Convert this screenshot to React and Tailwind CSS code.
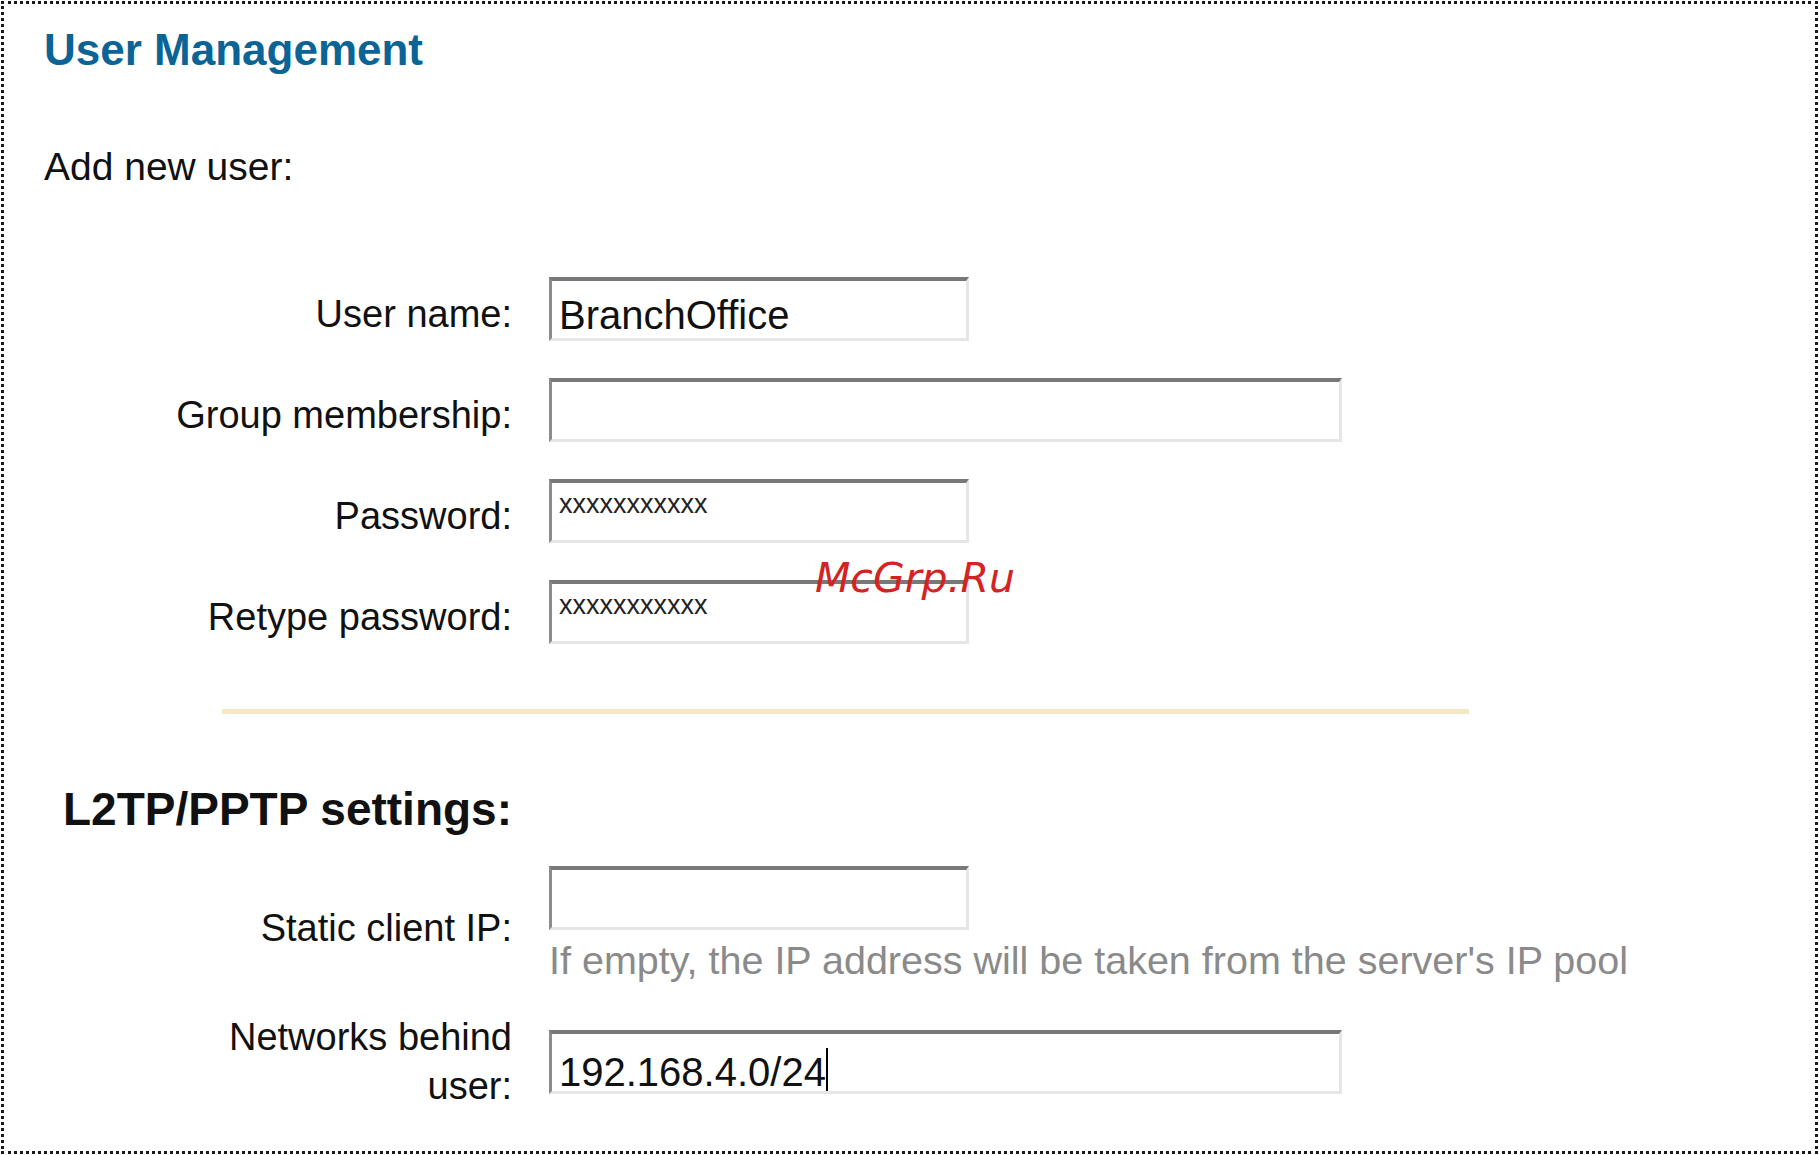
const sans = "font-['Liberation_Sans',Arial,sans-serif]";

function Field({ wide, children, className = '' }) {
    return (
        <div
            className={`h-[64px] ${wide ? 'w-[793px]' : 'w-[420px]'} bg-white border-t-[4px] border-l-[3px] border-r-[3px] border-b-[3px] border-t-[#787878] border-l-[#8c8c8c] border-r-[#e6e6e8] border-b-[#e6e6e8] pl-[7px] whitespace-nowrap ${className}`}
        >
            {children}
        </div>
    );
}

function Row({ label, children, labelClass = 'pt-[10px] leading-[40px]' }) {
    return (
        <div className="flex items-center">
            <div className={`w-[468px] shrink-0 text-right text-[38px] text-[#111] ${labelClass}`}>{label}</div>
            <div className="ml-[37px]">{children}</div>
        </div>
    );
}

export default function App() {
    return (
        <div className={`w-[1819px] h-[1155px] bg-white p-[1px] ${sans}`}>
            <div className="relative h-full border-[3px] border-dotted border-[#1a1a1a] pt-[24px] pl-[40px]">
                <h1 className="text-[44px] leading-[44px] font-bold text-[#0a6496]">User Management</h1>

                <p className="mt-[75px] text-[39px] leading-[40px] text-[#111]">Add new user:</p>

                <div className="mt-[90px] flex flex-col gap-[37px]">
                    <Row label="User name:">
                        <Field className="pt-[14px] text-[40px] leading-[40px] text-[#111]">BranchOffice</Field>
                    </Row>
                    <Row label="Group membership:">
                        <Field wide />
                    </Row>
                    <Row label="Password:">
                        <Field className="pt-[8px] text-[27px] leading-[27px] text-[#222]">xxxxxxxxxxx</Field>
                    </Row>
                    <Row label="Retype password:">
                        <Field className="pt-[8px] text-[27px] leading-[27px] text-[#222]">xxxxxxxxxxx</Field>
                    </Row>
                </div>

                {/* divider */}
                <div className="mt-[65px] ml-[178px] w-[1247px] h-[5px] bg-[#f5e6c4]"></div>

                <div className="mt-[72px] w-[468px] text-right text-[46px] leading-[46px] font-bold text-[#111] whitespace-nowrap">
                    L2TP/PPTP settings:
                </div>

                <div className="mt-[34px]">
                    <Row label="Static client IP:">
                        <div className="flex flex-col">
                            <Field />
                            <p className="mt-[10px] text-[39.5px] leading-[40px] text-[#8a8a8a] whitespace-nowrap">
                                If empty, the IP address will be taken from the server's IP pool
                            </p>
                        </div>
                    </Row>
                </div>

                <div className="mt-[33px]">
                    <Row label={<>Networks behind<br />user:</>} labelClass="leading-[49px]">
                        <Field wide className="pt-[14px] text-[40px] leading-[40px] text-[#111]">
                            192.168.4.0/24<span className="inline-block w-[2px] h-[43px] bg-black align-[-5px]"></span>
                        </Field>
                    </Row>
                </div>

                {/* watermark */}
                <div className="absolute left-[811px] top-[554px] text-[41px] leading-[40px] italic text-[#d42323] font-['DejaVu_Sans',sans-serif]">
                    McGrp.Ru
                </div>
            </div>
        </div>
    );
}
